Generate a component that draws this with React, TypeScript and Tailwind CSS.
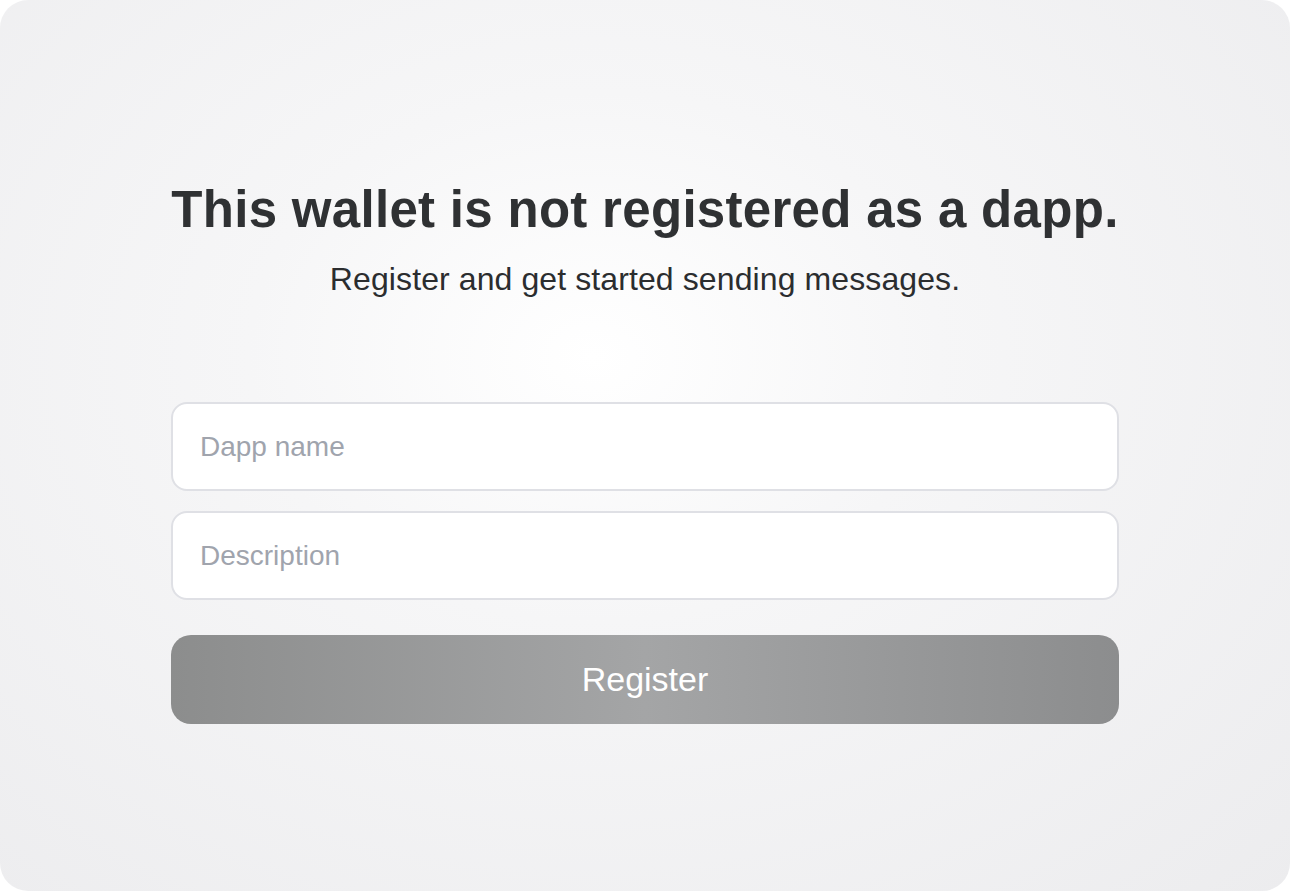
import React from "react";

export default function App() {
  return (
    <div className="w-[1290px] h-[891px] bg-white" style={{ fontFamily: '"Liberation Sans", Arial, sans-serif' }}>
      <div className="w-full h-full rounded-[28px] bg-[radial-gradient(ellipse_at_46%_40%,#ffffff_0%,#f6f6f7_35%,#ececee_100%)] flex flex-col items-center">
        <div className="w-[948px] mt-[178px] flex flex-col items-center">
          <h1 className="text-[51px] leading-[64px] font-bold tracking-[0.3px] text-[#2f3133]">
            This wallet is not registered as a dapp.
          </h1>
          <p className="mt-[17px] text-[32px] leading-[40px] tracking-[0.1px] text-[#2b2d2f]">
            Register and get started sending messages.
          </p>
          <div className="w-full mt-[103px] flex flex-col gap-[20px]">
            <input
              placeholder="Dapp name"
              className="w-full h-[89px] rounded-[16px] border-2 border-[#dfe0e5] bg-white px-[27px] text-[28px] text-[#2b2d2f] placeholder:text-[#a0a4ad] outline-none"
            />
            <input
              placeholder="Description"
              className="w-full h-[89px] rounded-[16px] border-2 border-[#dfe0e5] bg-white px-[27px] text-[28px] text-[#2b2d2f] placeholder:text-[#a0a4ad] outline-none"
            />
          </div>
          <button className="w-full mt-[35px] h-[89px] rounded-[20px] bg-[linear-gradient(to_right,#8c8d8d_0%,#a4a5a6_50%,#8c8d8e_100%)] text-white text-[34px]">
            Register
          </button>
        </div>
      </div>
    </div>
  );
}
